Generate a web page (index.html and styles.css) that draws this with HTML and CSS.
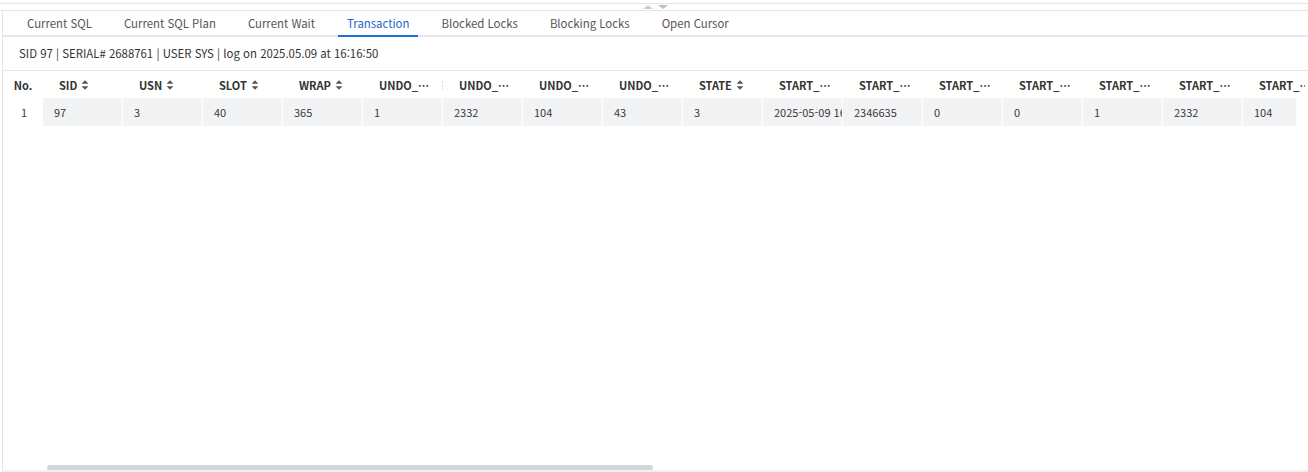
FILE: index.html
```html
<!DOCTYPE html>
<html lang="ko">
<head>
<meta charset="utf-8">
<title>Transaction</title>
<link rel="stylesheet" href="styles.css">
</head>
<body>
<div class="app">
  <div class="splitter">
    <span class="arrow arrow-up"></span>
    <span class="arrow arrow-down"></span>
  </div>
  <div class="panel">
    <nav class="tabs">
      <a class="tab">Current SQL</a>
      <a class="tab">Current SQL Plan</a>
      <a class="tab">Current Wait</a>
      <a class="tab active">Transaction</a>
      <a class="tab">Blocked Locks</a>
      <a class="tab">Blocking Locks</a>
      <a class="tab">Open Cursor</a>
    </nav>
    <div class="info">SID 97 | SERIAL# 2688761 | USER SYS | log on 2025.05.09 at 16:16:50</div>
    <div class="grid">
      <div class="grid-head">
        <div class="th th-no">No.</div>
        <div class="th"><span class="label">SID</span><svg class="sort" viewBox="0 0 8 12"><path d="M4 1.2L7.4 4.8H0.6Z M0.6 7.2H7.4L4 10.8Z"/></svg></div>
        <div class="th"><span class="label">USN</span><svg class="sort" viewBox="0 0 8 12"><path d="M4 1.2L7.4 4.8H0.6Z M0.6 7.2H7.4L4 10.8Z"/></svg></div>
        <div class="th"><span class="label">SLOT</span><svg class="sort" viewBox="0 0 8 12"><path d="M4 1.2L7.4 4.8H0.6Z M0.6 7.2H7.4L4 10.8Z"/></svg></div>
        <div class="th"><span class="label">WRAP</span><svg class="sort" viewBox="0 0 8 12"><path d="M4 1.2L7.4 4.8H0.6Z M0.6 7.2H7.4L4 10.8Z"/></svg></div>
        <div class="th th-resize"><span class="label">UNDO_FILE_NO</span></div>
        <div class="th"><span class="label">UNDO_BLOCK_NO</span></div>
        <div class="th"><span class="label">UNDO_SEQUENCE</span></div>
        <div class="th"><span class="label">UNDO_RECORD</span></div>
        <div class="th"><span class="label">STATE</span><svg class="sort" viewBox="0 0 8 12"><path d="M4 1.2L7.4 4.8H0.6Z M0.6 7.2H7.4L4 10.8Z"/></svg></div>
        <div class="th"><span class="label">START_TIME</span></div>
        <div class="th"><span class="label">START_SCN</span></div>
        <div class="th"><span class="label">START_SCNW</span></div>
        <div class="th"><span class="label">START_UEXT</span></div>
        <div class="th"><span class="label">START_UBAFIL</span></div>
        <div class="th"><span class="label">START_UBABLK</span></div>
        <div class="th"><span class="label">START_UBASQN</span></div>
      </div>
      <div class="grid-body">
        <div class="row">
          <div class="td td-no">1</div>
          <div class="td">97</div>
          <div class="td">3</div>
          <div class="td">40</div>
          <div class="td">365</div>
          <div class="td">1</div>
          <div class="td">2332</div>
          <div class="td">104</div>
          <div class="td">43</div>
          <div class="td">3</div>
          <div class="td">2025-05-09 16:16:50</div>
          <div class="td">2346635</div>
          <div class="td">0</div>
          <div class="td">0</div>
          <div class="td">1</div>
          <div class="td">2332</div>
          <div class="td">104</div>
        </div>
      </div>
    </div>
    <div class="hscroll"><div class="thumb"></div></div>
  </div>
</div>
</body>
</html>
```
FILE: styles.css
```css
* { box-sizing: border-box; }

html, body {
  margin: 0;
  padding: 0;
  height: 100%;
  background: #ffffff;
  font-family: "Noto Sans CJK KR", "Noto Sans", sans-serif;
  overflow: hidden;
}

.app {
  height: 100vh;
  display: flex;
  flex-direction: column;
  padding-top: 3px;
}

.splitter {
  height: 8px;
  border-top: 1px solid #e6e6e6;
  border-bottom: 1px solid #e6e6e6;
  display: flex;
  justify-content: center;
  align-items: center;
  gap: 5px;
  padding-left: 3px;
}

.arrow {
  width: 0;
  height: 0;
  border-left: 5.5px solid transparent;
  border-right: 5.5px solid transparent;
}
.arrow-up { border-bottom: 4px solid #cfcfcf; }
.arrow-down { border-top: 4px solid #bfbfbf; }

.panel {
  flex: 1;
  min-height: 0;
  margin-left: 2px;
  border-left: 1px solid #e4e4e4;
  border-bottom: 2px solid #eeeff1;
  display: flex;
  flex-direction: column;
}

.tabs {
  height: 26px;
  display: flex;
  gap: 14px;
  padding-left: 15px;
  border-bottom: 2px solid #e6e6ec;
}

.tab {
  padding: 0 9px;
  margin-bottom: -2px;
  border-bottom: 2px solid transparent;
  font-size: 11.4px;
  line-height: 24px;
  color: #555555;
  white-space: nowrap;
}
.tab.active {
  color: #2268cc;
  border-bottom-color: #1f6fd8;
}

.info {
  height: 34px;
  padding-left: 16px;
  font-size: 11.4px;
  line-height: 33px;
  color: #333333;
  border-bottom: 1px solid #e6e6e6;
  white-space: nowrap;
}

.grid {
  flex: 1;
  min-height: 0;
  overflow: hidden;
}

.grid-head {
  display: flex;
  height: 27px;
  margin-right: 3px;
  overflow: hidden;
}

.th {
  flex: 0 0 80px;
  width: 80px;
  display: flex;
  align-items: center;
  gap: 4px;
  padding: 0 12px 0 16px;
  font-size: 11px;
  font-weight: 700;
  color: #333333;
  white-space: nowrap;
  position: relative;
}

.th .label {
  overflow: hidden;
  text-overflow: ellipsis;
  min-width: 0;
}

.th-no {
  flex: 0 0 40px;
  width: 40px;
  padding: 0;
  justify-content: center;
}

.th-resize::after {
  content: "";
  position: absolute;
  right: 0;
  top: 10px;
  height: 8px;
  border-right: 1px dotted #d4d4d4;
}

.sort {
  flex: 0 0 8px;
  width: 8px;
  height: 12px;
  fill: #555555;
}

.grid-body {
  margin-right: 12px;
  overflow: hidden;
}

.row {
  display: flex;
  height: 28px;
}

.td {
  flex: 0 0 80px;
  width: 80px;
  padding-left: 11px;
  background: #f2f3f5;
  border-right: 1px solid #ffffff;
  font-size: 11px;
  line-height: 28px;
  color: #3a3a3a;
  white-space: nowrap;
  overflow: hidden;
}

.td-no {
  flex: 0 0 40px;
  width: 40px;
  padding: 0 0 0 2px;
  text-align: center;
  background: #ffffff;
  border-right: 0;
}

.hscroll {
  height: 5px;
  padding-left: 44px;
}

.thumb {
  width: 606px;
  height: 5px;
  border-radius: 3px;
  background: #d2d7dc;
}
```
